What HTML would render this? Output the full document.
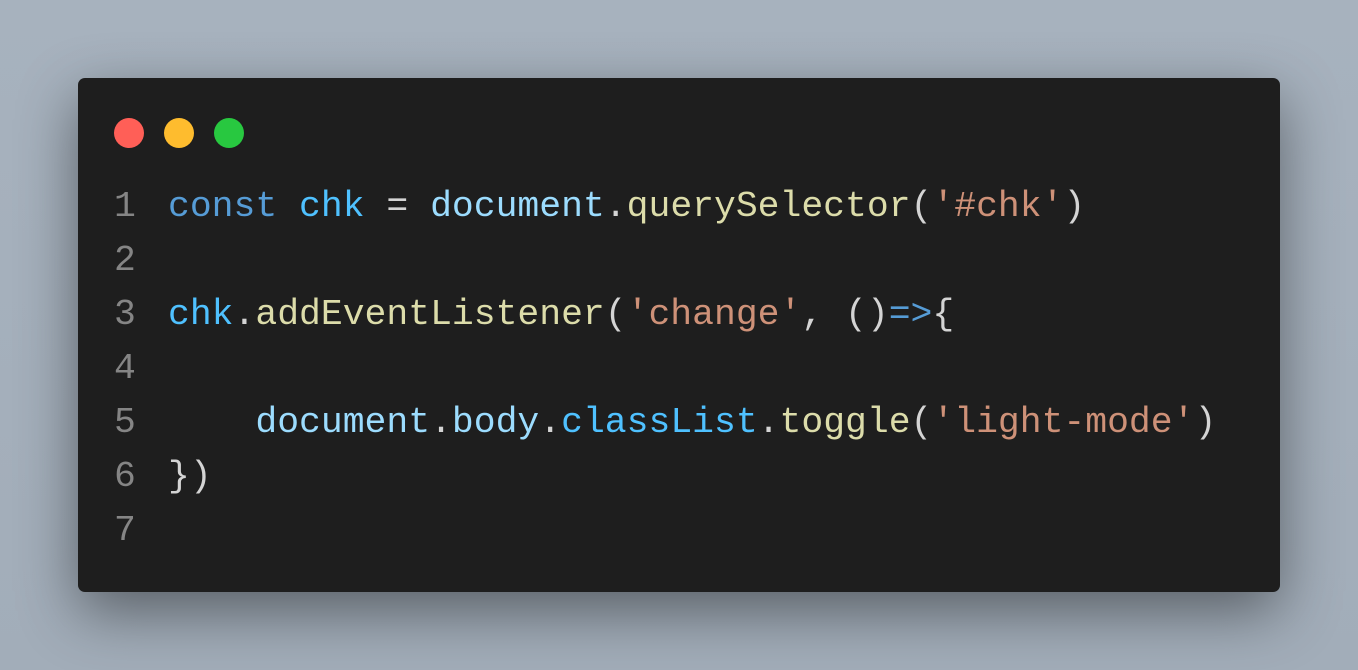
<!DOCTYPE html>
<html><head><style>
html,body{margin:0;width:1358px;height:670px;overflow:hidden;background:linear-gradient(180deg,#a7b2be,#a2adb9);}
.win{position:absolute;left:78px;top:78px;width:1202px;height:514px;background:#1e1e1e;border-radius:7px;box-shadow:0 20px 60px rgba(0,0,0,0.45);}
.dot{position:absolute;top:40px;width:30px;height:30px;border-radius:50%;}
pre{position:absolute;top:102px;margin:0;font-family:"Liberation Mono",monospace;font-size:36.4px;line-height:54px;color:#d4d4d4;}
.ln{left:36px;color:#858585}.code{left:90px}
.k{color:#569cd6}.v{color:#4fc1ff}.o{color:#9cdcfe}.f{color:#dcdcaa}.s{color:#ce9178}
</style></head><body>
<div class="win">
<div class="dot" style="left:36px;background:#ff5f57"></div>
<div class="dot" style="left:86px;background:#febc2e"></div>
<div class="dot" style="left:136px;background:#28c840"></div>
<pre class="ln">1
2
3
4
5
6
7</pre>
<pre class="code"><span class="k">const</span> <span class="v">chk</span> = <span class="o">document</span>.<span class="f">querySelector</span>(<span class="s">'#chk'</span>)

<span class="v">chk</span>.<span class="f">addEventListener</span>(<span class="s">'change'</span>, ()<span class="k">=&gt;</span>{

    <span class="o">document</span>.<span class="o">body</span>.<span class="v">classList</span>.<span class="f">toggle</span>(<span class="s">'light-mode'</span>)
})
</pre>
</div>
</body></html>
